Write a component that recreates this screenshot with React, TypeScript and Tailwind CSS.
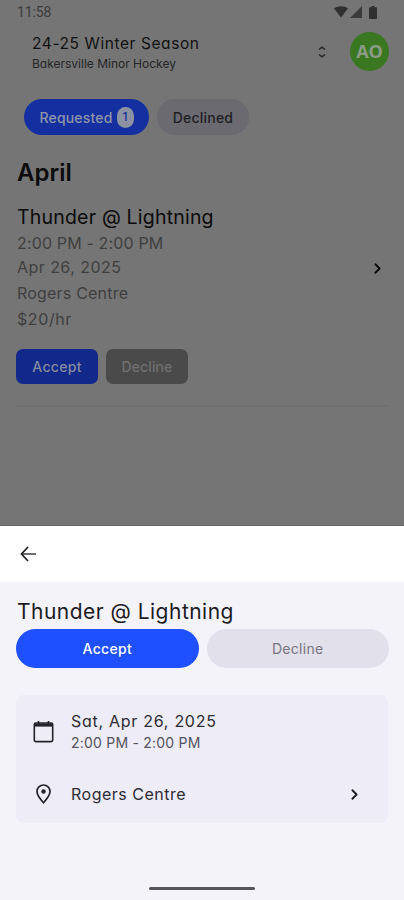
import React from 'react';
import { ChevronRight } from 'lucide-react';

const StatusBar: React.FC = () => (
  <div className="flex h-6 items-center justify-between pl-[17px] pr-[27px] text-[#3b3b3b]">
    <span className="font-['Roboto'] text-[14px] leading-6 tracking-[-0.1px]">11:58</span>
    <div className="flex items-center">
      <svg className="h-[12px] w-[14px]" viewBox="0 0 14 12" fill="#303030">
        <path d="M0 2.6C4 -.6 10 -.6 14 2.6L7 11.5z" />
      </svg>
      <svg className="ml-[2px] h-[12px] w-[12px]" viewBox="0 0 12 12" fill="#3b3b3b">
        <path d="M12 0v12H0z" />
      </svg>
      <svg className="ml-[7px] h-[13px] w-[8px]" viewBox="0 0 8 13" fill="#303030">
        <path d="M2.5 0h3v1.3H7.2q.8 0 .8.8V12.2q0 .8-.8.8H.8Q0 13 0 12.2V2.1q0-.8.8-.8H2.5z" />
      </svg>
    </div>
  </div>
);

const Header: React.FC = () => (
  <header className="flex h-[55px] items-center pl-8 pr-[15px]">
    <div className="flex-1 pt-[5px]">
      <p className="text-[15.5px] leading-5 tracking-[0.58px] text-[#121212]">24-25 Winter Season</p>
      <p className="text-[12px] leading-5 text-[#262626]">Bakersville Minor Hockey</p>
    </div>
    <svg className="mr-[23px] h-[14px] w-[10px]" viewBox="0 0 10 14" fill="none" stroke="#222" strokeWidth="1.4">
      <path d="M2 4.5 5 2.2l3 2.3M2 9.5l3 2.3 3-2.3" />
    </svg>
    <div className="flex h-[39px] w-[39px] items-center justify-center rounded-full bg-[#397820] font-['Open_Sans'] text-[18px] font-bold text-[#8b9b86]">
      AO
    </div>
  </header>
);

const Game: React.FC = () => (
  <section className="mx-4 border-b-2 border-[#707070] pb-[21px] pl-px">
    <div className="flex items-center justify-between">
      <div className="text-[16px] text-[#3f3f3f]">
        <h3 className="text-[19.5px] leading-[28px] tracking-[0.2px] text-[#0b0b0b]">Thunder @ Lightning</h3>
        <p className="leading-[25px] tracking-[0.15px]">2:00 PM - 2:00 PM</p>
        <p className="leading-[22px] tracking-[0.45px]">Apr 26, 2025</p>
        <p className="leading-[30px] tracking-[0.2px]">Rogers Centre</p>
        <p className="leading-[23px] tracking-[0.6px]">$20/hr</p>
      </div>
      <ChevronRight className="mr-[2px] mt-[2px] h-[17px] w-[17px] text-[#080808]" strokeWidth={2.6} />
    </div>
    <div className="-ml-px mt-[18px] flex gap-2">
      <button className="h-[35px] w-[82px] rounded-[7px] bg-[#12288a] text-[14px] font-medium tracking-[0.3px] text-[#858b9f]">Accept</button>
      <button className="h-[35px] w-[82px] rounded-[7px] bg-[#4a4a4a] text-[14px] font-medium tracking-[0.1px] text-[#707070]">Decline</button>
    </div>
  </section>
);

const Sheet: React.FC = () => (
  <div className="relative flex flex-1 flex-col bg-[#f5f3fa]">
    <div className="flex h-[56px] items-center bg-white pl-5">
      <svg className="h-4 w-4" viewBox="0 0 16 16" fill="none" stroke="#1c1b1f" strokeWidth="1.7">
        <path d="M8 1 1.5 8 8 15" />
        <path d="M2 8h14" strokeWidth="1.3" />
      </svg>
    </div>
    <h2 className="pl-[17px] pt-[15px] text-[21px] leading-[29px] tracking-[0.48px] text-[#1c1b1f]">Thunder @ Lightning</h2>
    <div className="mx-[15px] mt-[3px] flex gap-2 pl-px">
      <button className="h-[39px] flex-1 rounded-full bg-[#1e50ff] text-[14px] font-medium tracking-[0.3px] text-white">Accept</button>
      <button className="h-[39px] flex-1 rounded-full bg-[#e2e0ea] text-[14px] tracking-[0.3px] text-[#77757f]">Decline</button>
    </div>
    <div className="mx-4 mt-[27px] h-[128px] rounded-lg bg-[#eeecf7] px-[17px] text-[#2c2b33]">
      <div className="flex h-[72px] items-center">
        <svg className="h-[23px] w-[21px]" viewBox="0 0 21 23" fill="none" stroke="#24232b" strokeWidth="1.6">
          <rect x="1.3" y="3" width="18.4" height="18.6" rx="1.5" />
          <path d="M1 5h19" strokeWidth="3.2" />
          <path d="M5.5 1v3M15.5 1v3" />
        </svg>
        <div className="ml-[17px]">
          <p className="text-[16px] leading-[22px] tracking-[0.72px]">Sat, Apr 26, 2025</p>
          <p className="text-[14px] leading-[21px] tracking-[0.22px] text-[#55535e]">2:00 PM - 2:00 PM</p>
        </div>
      </div>
      <div className="flex h-[54px] items-center">
        <svg className="ml-[3px] h-[20px] w-[15px]" viewBox="0 0 15 20" fill="none" stroke="#24232b" strokeWidth="1.7">
          <path d="M7.5 18.7C3.2 14 1 10.8 1 7.5a6.5 6.5 0 0 1 13 0c0 3.3-2.2 6.5-6.5 11.2z" />
          <circle cx="7.5" cy="7.5" r="2.2" fill="#24232b" stroke="none" />
        </svg>
        <p className="ml-5 flex-1 text-[16px] tracking-[0.5px]">Rogers Centre</p>
        <ChevronRight className="mr-[8px] h-[17px] w-[17px] text-[#1c1b1f]" strokeWidth={2.6} />
      </div>
    </div>
    <div className="mx-auto mb-[10px] mt-auto h-[3px] w-[106px] rounded-full bg-[#55545a]" />
  </div>
);

const App: React.FC = () => (
  <div className="flex h-[900px] w-[404px] flex-col overflow-hidden bg-[#757575] font-['Inter',sans-serif] [font-feature-settings:'cv11']">
    <div className="h-[526px] border-b border-[#676767]">
      <StatusBar />
      <Header />
      <div className="mt-5 flex gap-2 pl-6">
        <button className="flex h-9 w-[125px] items-center justify-center rounded-full bg-[#142f9f] text-[14px] font-medium tracking-[0.2px] text-[#9096aa]">
          Requested
          <span className="ml-1 flex h-[21px] w-[17px] items-center justify-center rounded-full bg-[#8d92a3] text-[12px] text-[#142f9f]">1</span>
        </button>
        <button className="h-9 w-[92px] rounded-full bg-[#6a6a70] text-[14px] font-medium tracking-[0.2px] text-[#202024]">Declined</button>
      </div>
      <h1 className="mb-[14px] mt-[22px] pl-[17px] text-[24px] font-semibold leading-8 text-[#0b0b0b]">April</h1>
      <Game />
    </div>
    <Sheet />
  </div>
);

export default App;
